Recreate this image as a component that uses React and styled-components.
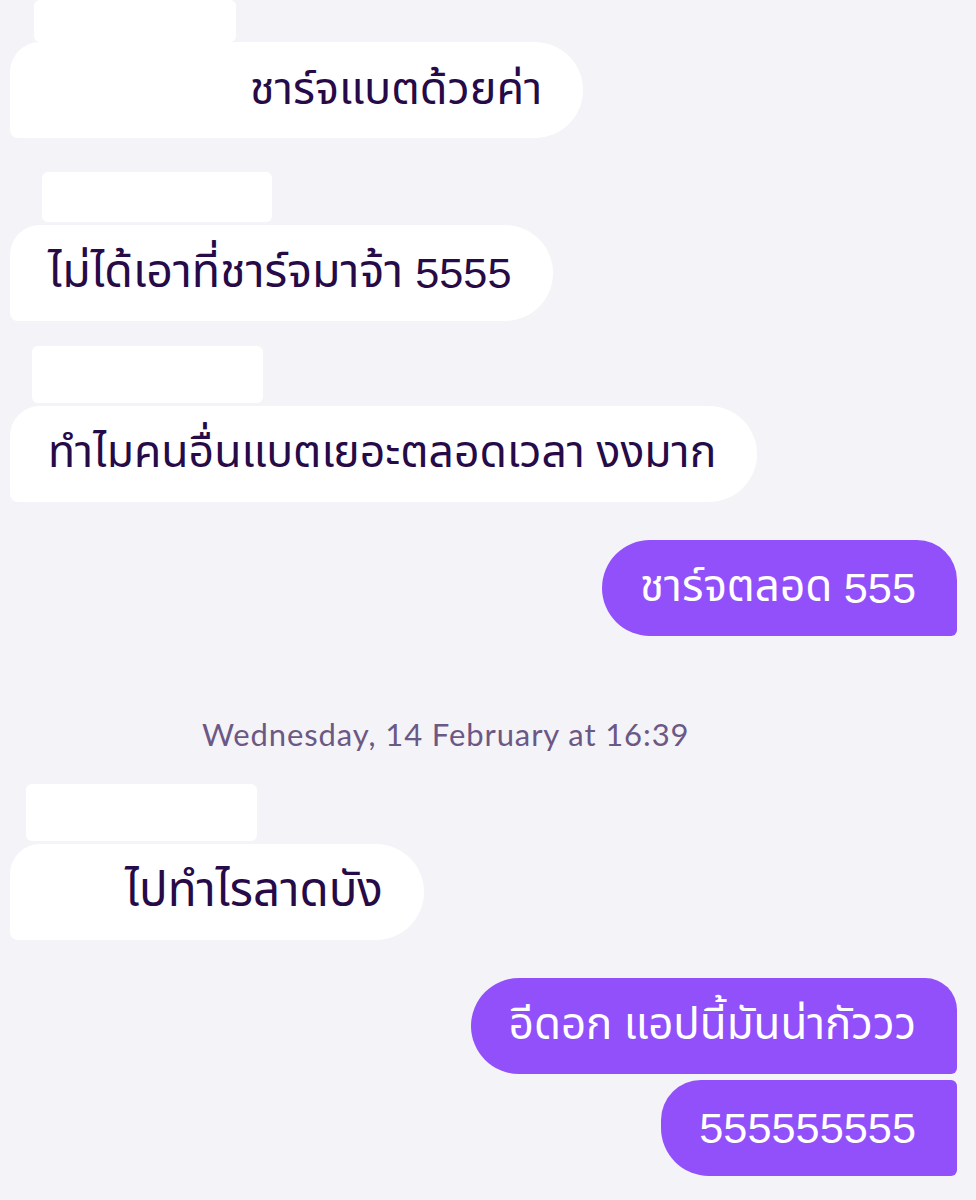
import styled, { createGlobalStyle } from "styled-components";

const GlobalStyle = createGlobalStyle`
  html, body {
    margin: 0;
    padding: 0;
    background: #f4f3f7;
  }
  body {
    font-family: "Noto Sans Thai", "Liberation Sans", "Noto Sans", sans-serif;
  }
`;

const messages = [
  { type: "in", text: "ชาร์จแบตด้วยค่า", spacer: 202, size: 45, mask: { left: 34, width: 202, height: 42, gap: 0, top: 0 } },
  { type: "in", text: "ไม่ได้เอาที่ชาร์จมาจ้า 5555", size: 46.5, mask: { left: 42, width: 230, height: 50, gap: 3, top: 34 } },
  { type: "in", text: "ทำไมคนอื่นแบตเยอะตลอดเวลา งงมาก", size: 44.5, mask: { left: 32, width: 231, height: 57, gap: 3, top: 25 } },
  { type: "out", text: "ชาร์จตลอด 555", size: 44, top: 38, corner: "single" },
  { type: "stamp", text: "Wednesday, 14 February at 16:39" },
  { type: "in", text: "ไปทำไรลาดบัง", spacer: 77, size: 47.5, mask: { left: 26, width: 231, height: 57, gap: 3, top: 0 } },
  { type: "out", text: "อีดอก แอปนี้มันน่ากัววว", size: 43.8, top: 38, corner: "first" },
  { type: "out", text: "555555555", size: 42, top: 6, corner: "last" },
];

// digits keep one size; Thai runs get their own size so widths line up
const renderText = (text, size) =>
  text.split(/(\d+)/).map((part, i) =>
    /^\d+$/.test(part) ? (
      <Digits key={i}>{part}</Digits>
    ) : (
      <Thai key={i} $size={size}>{part}</Thai>
    )
  );

export default function App() {
  return (
    <>
      <GlobalStyle />
      <Thread>
        {messages.map((m, i) => {
          if (m.type === "stamp") {
            return <DateStamp key={i}>{m.text}</DateStamp>;
          }
          if (m.type === "out") {
            return (
              <OutRow key={i} $top={m.top}>
                <Bubble $out $corner={m.corner}>{renderText(m.text, m.size)}</Bubble>
              </OutRow>
            );
          }
          return (
            <InGroup key={i} $top={m.mask.top}>
              <NameMask
                $left={m.mask.left}
                $width={m.mask.width}
                $height={m.mask.height}
                $gap={m.mask.gap}
              />
              <Bubble>
                {m.spacer && <Spacer $width={m.spacer} />}
                {renderText(m.text, m.size)}
              </Bubble>
            </InGroup>
          );
        })}
      </Thread>
    </>
  );
}

const Thread = styled.div`
  display: flex;
  flex-direction: column;
  width: 976px;
  height: 1200px;
  overflow: hidden;
  padding: 0 19px 0 10px;
  box-sizing: border-box;
`;

const InGroup = styled.div`
  display: flex;
  flex-direction: column;
  align-items: flex-start;
  margin-top: ${(p) => p.$top}px;
`;

const NameMask = styled.div`
  margin-left: ${(p) => p.$left - 10}px;
  width: ${(p) => p.$width}px;
  height: ${(p) => p.$height}px;
  margin-bottom: ${(p) => p.$gap}px;
  background: #ffffff;
  border-radius: 6px;
`;

const OutRow = styled.div`
  display: flex;
  justify-content: flex-end;
  margin-top: ${(p) => p.$top}px;
`;

const radii = {
  in: "30px 48px 48px 8px",
  single: "48px 40px 6px 48px",
  first: "48px 32px 6px 48px",
  last: "40px 6px 6px 48px",
};

const Bubble = styled.div`
  display: flex;
  align-items: center;
  height: 96px;
  box-sizing: border-box;
  padding: 0 41px 0 38px;
  font-size: 42px;
  line-height: 56px;
  white-space: pre;
  background: ${(p) => (p.$out ? "#9150fa" : "#ffffff")};
  color: ${(p) => (p.$out ? "#ffffff" : "#260b48")};
  border-radius: ${(p) => (p.$out ? radii[p.$corner] : radii.in)};
`;

const Thai = styled.span`
  font-size: ${(p) => p.$size}px;
`;

const Digits = styled.span`
  font-family: "Liberation Sans", sans-serif;
  font-size: 43.3px;
`;

const Spacer = styled.span`
  display: inline-block;
  width: ${(p) => p.$width}px;
  flex-shrink: 0;
`;

const DateStamp = styled.div`
  margin: 78px 0 0;
  height: 70px;
  padding-left: 192px;
  font-family: "Lato", "Noto Sans", sans-serif;
  font-size: 31px;
  letter-spacing: 0.9px;
  color: #6c5884;
  line-height: 40px;
`;
